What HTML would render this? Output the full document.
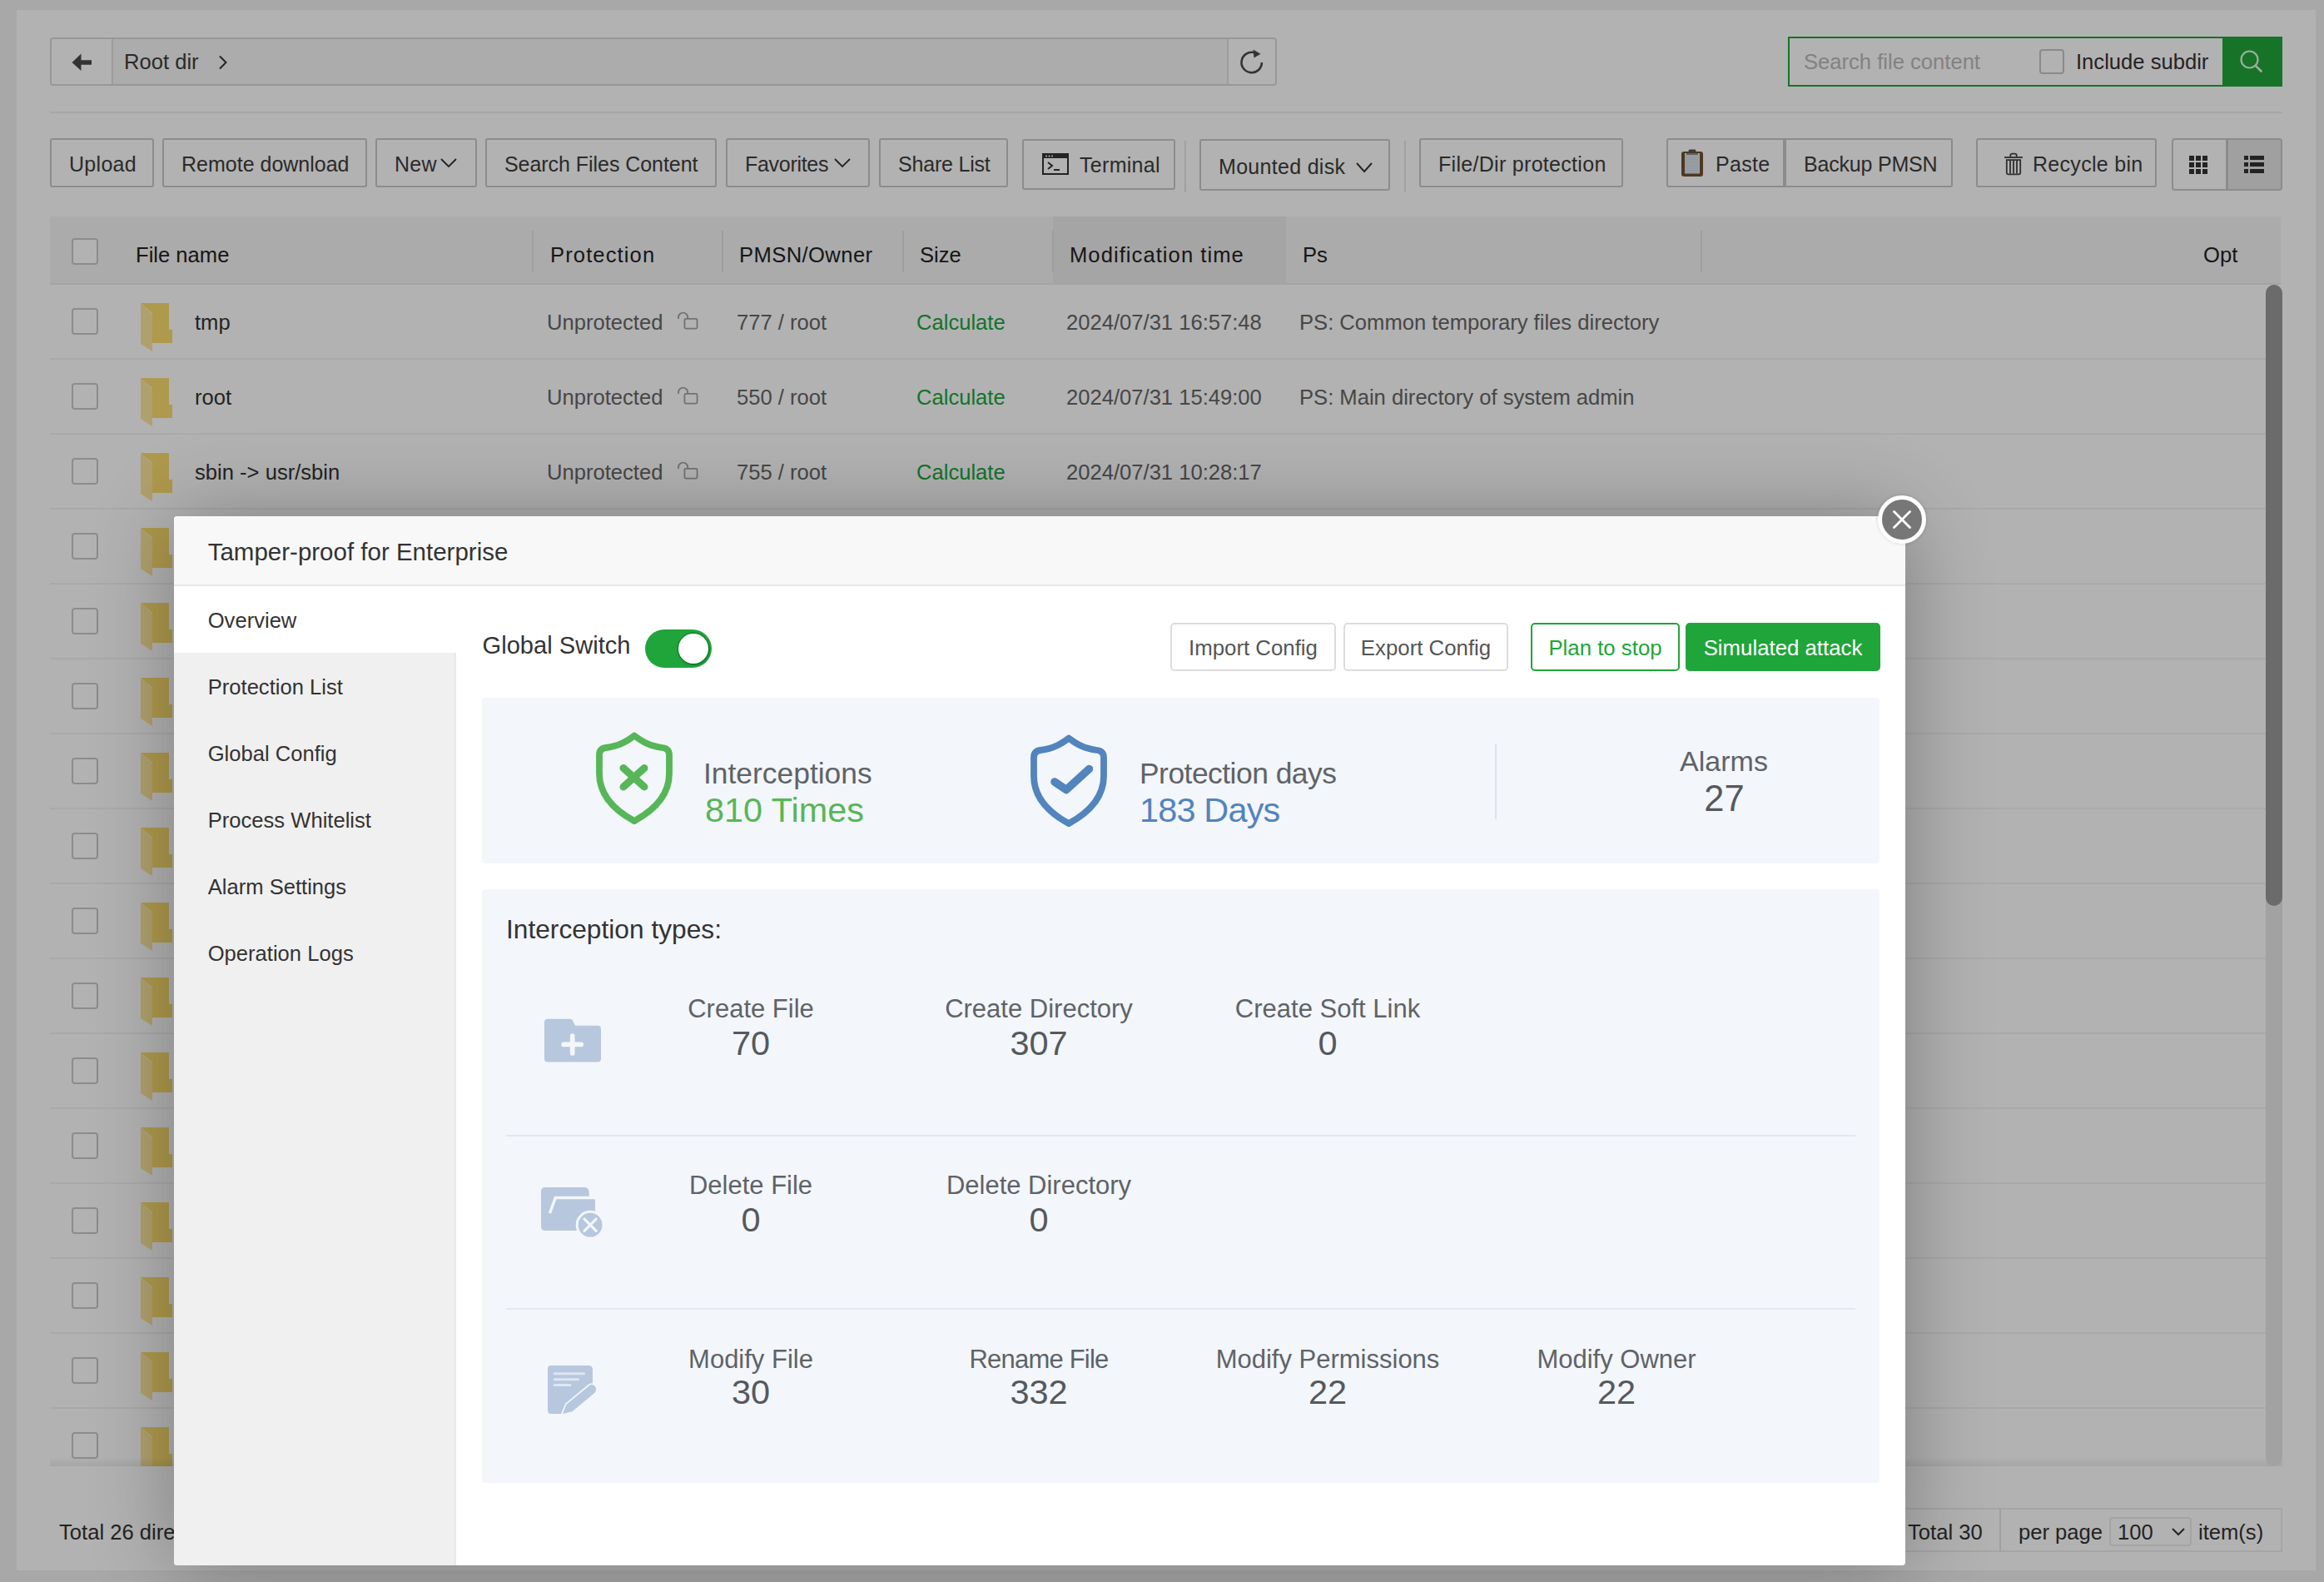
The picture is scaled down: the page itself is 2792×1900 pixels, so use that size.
<!DOCTYPE html>
<html><head><meta charset="utf-8">
<style>
*{box-sizing:border-box;margin:0;padding:0}
html,body{width:2792px;height:1900px;overflow:hidden}
body{font-family:"Liberation Sans",sans-serif;background:#f1f1f1;position:relative;color:#333}
.a{position:absolute}
#page{left:20px;top:12px;width:2762px;height:1874px;background:#fff}
.btn{position:absolute;top:166px;height:59px;border:2px solid #c9c9c9;border-radius:3px;background:#fff;font-size:25px;letter-spacing:0.3px;color:#3d3d3d;white-space:nowrap;line-height:58px;padding:0 0 0 21px}
.vdiv{position:absolute;width:2px;background:#e6e6e6}
.th{position:absolute;top:0;height:80px;line-height:92px;font-size:25.6px;color:#222;white-space:nowrap}
.hsep{position:absolute;top:17px;width:2px;height:50px;background:#e3e3e3}
.row{position:absolute;left:60px;width:2662px;height:90px;border-bottom:2px solid #efefef}
.cb{position:absolute;left:86px;width:32px;height:32px;border:2px solid #c9c9c9;border-radius:4px;background:#fff}
.td{position:absolute;font-size:25.6px;white-space:nowrap;line-height:30px}
#overlay{left:0;top:0;width:2792px;height:1900px;background:rgba(0,0,0,.3)}
#modal{left:209px;top:620px;width:2080px;height:1260px;background:#fff;border-radius:4px;box-shadow:2px 2px 100px rgba(0,0,0,.3);overflow:hidden}
</style></head>
<body>
<div id="page" class="a"></div>

<!-- breadcrumb -->
<div class="a" style="left:60px;top:45px;width:1474px;height:58px;border:2px solid #d9d9d9;border-radius:4px;background:#f6f6f6;overflow:hidden">
  <div class="a" style="left:0;top:0;width:74px;height:54px;background:#fff;border-right:2px solid #e1e1e1"></div>
  <svg class="a" style="left:24px;top:16px" width="26" height="24" viewBox="0 0 26 24"><path d="M0.5 12 L11.5 1.5 L11.5 9.2 L24 9.2 L24 14.8 L11.5 14.8 L11.5 22 Z" fill="#4a4a4a"/></svg>
  <div class="a" style="left:87px;top:12px;font-size:25.6px;line-height:30px;color:#3d3d3d">Root dir</div>
  <svg class="a" style="left:200px;top:19px" width="12" height="18" viewBox="0 0 12 18"><path d="M2 1.5 L9.5 9 L2 16.5" fill="none" stroke="#333" stroke-width="2"/></svg>
  <div class="a" style="left:1412px;top:0;width:60px;height:54px;background:#fff;border-left:2px solid #e1e1e1"></div>
  <svg class="a" style="left:1424px;top:10px" width="36" height="36" viewBox="0 0 36 36"><path d="M29.9 18 A12.2 12.2 0 1 1 20.5 6.1" fill="none" stroke="#4a4a4a" stroke-width="2.6"/><path d="M19.5 2.5 L28.5 7.8 L20.5 12.5 Z" fill="#4a4a4a"/></svg>
</div>

<!-- search box -->
<div class="a" style="left:2148px;top:44px;width:594px;height:60px;border:2px solid #20a53a;background:#fff"></div>
<div class="a" style="left:2167px;top:59px;font-size:25.6px;line-height:30px;color:#bbb">Search file content</div>
<div class="a" style="left:2450px;top:59px;width:30px;height:30px;border:2px solid #c6c6c6;border-radius:4px;background:#fff"></div>
<div class="a" style="left:2494px;top:59px;font-size:25.6px;line-height:30px;color:#333">Include subdir</div>
<div class="a" style="left:2670px;top:44px;width:72px;height:60px;background:#20a53a"></div>
<svg class="a" style="left:2690px;top:58px" width="32" height="32" viewBox="0 0 32 32"><circle cx="12.5" cy="13.5" r="10" fill="none" stroke="#e6f6e6" stroke-width="2.2"/><path d="M19.8 20.8 L26.5 27.5" stroke="#e6f6e6" stroke-width="2.6" stroke-linecap="round"/></svg>

<div class="a" style="left:60px;top:134px;width:2682px;height:2px;background:#eee"></div>

<!-- toolbar buttons -->
<div class="btn" style="left:60px;width:125px">Upload</div>
<div class="btn" style="left:195px;width:246px;letter-spacing:0">Remote download</div>
<div class="btn" style="left:451px;width:122px">New</div>
<svg class="a" style="left:528px;top:189px" width="22" height="13" viewBox="0 0 22 13"><path d="M2 2 L11 11 L20 2" fill="none" stroke="#333" stroke-width="1.9"/></svg>
<div class="btn" style="left:583px;width:278px;letter-spacing:-0.05px">Search Files Content</div>
<div class="btn" style="left:872px;width:173px;letter-spacing:-0.3px">Favorites</div>
<svg class="a" style="left:1001px;top:189px" width="22" height="13" viewBox="0 0 22 13"><path d="M2 2 L11 11 L20 2" fill="none" stroke="#333" stroke-width="1.9"/></svg>
<div class="btn" style="left:1056px;width:155px;letter-spacing:-0.2px">Share List</div>
<div class="btn" style="left:1228px;width:184px;top:167px;height:61px;padding-left:67px;line-height:59px">Terminal</div>
<svg class="a" style="left:1252px;top:184px" width="32" height="26" viewBox="0 0 32 26"><rect x="1" y="1" width="30" height="24" fill="none" stroke="#333" stroke-width="2"/><rect x="1" y="1" width="30" height="5" fill="#333"/><circle cx="5" cy="3.5" r="1" fill="#fff"/><circle cx="8.5" cy="3.5" r="1" fill="#fff"/><circle cx="12" cy="3.5" r="1" fill="#fff"/><path d="M7 11 L12 15 L7 19" fill="none" stroke="#333" stroke-width="2"/><path d="M14 20 L21 20" stroke="#333" stroke-width="2"/></svg>
<div class="vdiv" style="left:1423px;top:169px;height:62px"></div>
<div class="btn" style="left:1441px;width:229px;top:167px;height:62px;line-height:63px">Mounted disk</div>
<svg class="a" style="left:1628px;top:194px" width="22" height="14" viewBox="0 0 22 14"><path d="M2 2 L11 12 L20 2" fill="none" stroke="#333" stroke-width="1.9"/></svg>
<div class="vdiv" style="left:1687px;top:169px;height:62px"></div>
<div class="btn" style="left:1705px;width:245px">File/Dir protection</div>
<div class="btn" style="left:2002px;width:142px;padding-left:57px;border-radius:3px 0 0 3px">Paste</div>
<svg class="a" style="left:2019px;top:178px" width="28" height="36" viewBox="0 0 28 36"><rect x="1" y="4" width="26" height="30" rx="3" fill="#6e5232"/><rect x="5" y="6" width="18" height="24.5" fill="#e3ecf3"/><path d="M5 9 H22" stroke="#c3ced8" stroke-width="1"/><path d="M5 11.5 H22" stroke="#c3ced8" stroke-width="1"/><path d="M5 14 H22" stroke="#c3ced8" stroke-width="1"/><path d="M5 16.5 H22" stroke="#c3ced8" stroke-width="1"/><path d="M5 19 H22" stroke="#c3ced8" stroke-width="1"/><path d="M5 21.5 H22" stroke="#c3ced8" stroke-width="1"/><path d="M5 24 H22" stroke="#c3ced8" stroke-width="1"/><path d="M5 26.5 H22" stroke="#c3ced8" stroke-width="1"/><path d="M5 29 H22" stroke="#c3ced8" stroke-width="1"/><path d="M7 7 H21" stroke="#8a8a8a" stroke-width="2"/><rect x="9.5" y="1.5" width="9" height="3" rx="1.5" fill="#555"/></svg>
<div class="btn" style="left:2144px;width:202px;border-radius:0 3px 3px 0;letter-spacing:-0.2px">Backup PMSN</div>
<div class="btn" style="left:2374px;width:217px;padding-left:66px">Recycle bin</div>
<svg class="a" style="left:2406px;top:182px" width="26" height="30" viewBox="0 0 26 30"><g fill="none" stroke="#444" stroke-width="1.8"><path d="M2 7 H24"/><path d="M9.3 6.5 V4.8 Q9.3 2.6 11.5 2.6 H14.5 Q16.7 2.6 16.7 4.8 V6.5"/><path d="M4.8 10.2 V25.3 Q4.8 27.4 6.9 27.4 H19.1 Q21.2 27.4 21.2 25.3 V10.2 Z"/><path d="M9 10.5 V26.5 M13 10.5 V26.5 M17 10.5 V26.5"/></g></svg>
<div class="btn" style="left:2609px;width:67px;top:166px;height:63px;border-radius:4px 0 0 4px;padding:0"></div>
<div class="btn" style="left:2675px;width:67px;top:166px;height:63px;border-radius:0 4px 4px 0;padding:0;background:#e6e6e6;border-color:#c8c8c8"></div>
<svg class="a" style="left:2630px;top:187px" width="22" height="22" viewBox="0 0 22 22"><g fill="#333"><rect x="0" y="0" width="6" height="6"/><rect x="8" y="0" width="6" height="6"/><rect x="16" y="0" width="6" height="6"/><rect x="0" y="8" width="6" height="6"/><rect x="8" y="8" width="6" height="6"/><rect x="16" y="8" width="6" height="6"/><rect x="0" y="16" width="6" height="6"/><rect x="8" y="16" width="6" height="6"/><rect x="16" y="16" width="6" height="6"/></g></svg>
<svg class="a" style="left:2696px;top:187px" width="24" height="22" viewBox="0 0 24 22"><g fill="#333"><rect x="0" y="0" width="5" height="5"/><rect x="7" y="0" width="17" height="5"/><rect x="0" y="8" width="5" height="5"/><rect x="7" y="8" width="17" height="5"/><rect x="0" y="16" width="5" height="5"/><rect x="7" y="16" width="17" height="5"/></g></svg>

<!-- table -->
<div class="a" style="left:60px;top:260px;width:2680px;height:82px;background:#f5f5f5;border-bottom:2px solid #ebebeb">
  <div class="a" style="left:1205px;top:0;width:280px;height:80px;background:#ececec"></div>
  <div class="cb" style="left:26px;top:26px"></div>
  <div class="th" style="left:103px">File name</div>
  <div class="hsep" style="left:579px"></div>
  <div class="th" style="left:601px;letter-spacing:1.1px">Protection</div>
  <div class="hsep" style="left:807px"></div>
  <div class="th" style="left:828px;letter-spacing:0.4px">PMSN/Owner</div>
  <div class="hsep" style="left:1024px"></div>
  <div class="th" style="left:1045px">Size</div>
  <div class="hsep" style="left:1204px"></div>
  <div class="th" style="left:1225px;letter-spacing:1.05px">Modification time</div>
  <div class="th" style="left:1505px">Ps</div>
  <div class="hsep" style="left:1983px"></div>
  <div class="th" style="left:2587px">Opt</div>
</div>
<div class="a" style="left:0;top:0;width:2792px;height:1761px;overflow:hidden"><div class="a" style="left:60px;top:430px;width:2662px;height:2px;background:#f2f2f2"></div>
<div class="cb" style="top:370px"></div>
<svg class="a" style="left:168px;top:363px" width="40" height="60" viewBox="0 0 40 60"><path d="M1 1 L35 1 L35 33 L39 33 L39 49 L15 49 L15 13 L1 1 Z" fill="#f9dc6e"/><path d="M1 1 L15 14 L15 59 L1 50 Z" fill="#fce59e"/></svg>
<div class="td" style="left:234px;top:372px;color:#333">tmp</div>
<div class="td" style="left:657px;top:372px;color:#666">Unprotected</div>
<svg class="a" style="left:812px;top:372px" width="30" height="26" viewBox="0 0 30 26"><path d="M3 11 L3 9.2 A5.6 5.6 0 0 1 14.2 9.2 L14.2 10.5" fill="none" stroke="#a4a4a4" stroke-width="1.8"/><rect x="10.45" y="10.85" width="15.1" height="11.7" rx="1.5" fill="none" stroke="#a4a4a4" stroke-width="1.8"/></svg>
<div class="td" style="left:885px;top:372px;color:#666">777 / root</div>
<div class="td" style="left:1101px;top:372px;color:#20a53a">Calculate</div>
<div class="td" style="left:1281px;top:372px;color:#666">2024/07/31 16:57:48</div>
<div class="td" style="left:1561px;top:372px;color:#666">PS: Common temporary files directory</div>
<div class="a" style="left:60px;top:520px;width:2662px;height:2px;background:#f2f2f2"></div>
<div class="cb" style="top:460px"></div>
<svg class="a" style="left:168px;top:453px" width="40" height="60" viewBox="0 0 40 60"><path d="M1 1 L35 1 L35 33 L39 33 L39 49 L15 49 L15 13 L1 1 Z" fill="#f9dc6e"/><path d="M1 1 L15 14 L15 59 L1 50 Z" fill="#fce59e"/></svg>
<div class="td" style="left:234px;top:462px;color:#333">root</div>
<div class="td" style="left:657px;top:462px;color:#666">Unprotected</div>
<svg class="a" style="left:812px;top:462px" width="30" height="26" viewBox="0 0 30 26"><path d="M3 11 L3 9.2 A5.6 5.6 0 0 1 14.2 9.2 L14.2 10.5" fill="none" stroke="#a4a4a4" stroke-width="1.8"/><rect x="10.45" y="10.85" width="15.1" height="11.7" rx="1.5" fill="none" stroke="#a4a4a4" stroke-width="1.8"/></svg>
<div class="td" style="left:885px;top:462px;color:#666">550 / root</div>
<div class="td" style="left:1101px;top:462px;color:#20a53a">Calculate</div>
<div class="td" style="left:1281px;top:462px;color:#666">2024/07/31 15:49:00</div>
<div class="td" style="left:1561px;top:462px;color:#666">PS: Main directory of system admin</div>
<div class="a" style="left:60px;top:610px;width:2662px;height:2px;background:#f2f2f2"></div>
<div class="cb" style="top:550px"></div>
<svg class="a" style="left:168px;top:543px" width="40" height="60" viewBox="0 0 40 60"><path d="M1 1 L35 1 L35 33 L39 33 L39 49 L15 49 L15 13 L1 1 Z" fill="#f9dc6e"/><path d="M1 1 L15 14 L15 59 L1 50 Z" fill="#fce59e"/></svg>
<div class="td" style="left:234px;top:552px;color:#333">sbin -&gt; usr/sbin</div>
<div class="td" style="left:657px;top:552px;color:#666">Unprotected</div>
<svg class="a" style="left:812px;top:552px" width="30" height="26" viewBox="0 0 30 26"><path d="M3 11 L3 9.2 A5.6 5.6 0 0 1 14.2 9.2 L14.2 10.5" fill="none" stroke="#a4a4a4" stroke-width="1.8"/><rect x="10.45" y="10.85" width="15.1" height="11.7" rx="1.5" fill="none" stroke="#a4a4a4" stroke-width="1.8"/></svg>
<div class="td" style="left:885px;top:552px;color:#666">755 / root</div>
<div class="td" style="left:1101px;top:552px;color:#20a53a">Calculate</div>
<div class="td" style="left:1281px;top:552px;color:#666">2024/07/31 10:28:17</div>
<div class="a" style="left:60px;top:700px;width:2662px;height:2px;background:#f2f2f2"></div>
<div class="cb" style="top:640px"></div>
<svg class="a" style="left:168px;top:633px" width="40" height="60" viewBox="0 0 40 60"><path d="M1 1 L35 1 L35 33 L39 33 L39 49 L15 49 L15 13 L1 1 Z" fill="#f9dc6e"/><path d="M1 1 L15 14 L15 59 L1 50 Z" fill="#fce59e"/></svg>
<div class="a" style="left:60px;top:790px;width:2662px;height:2px;background:#f2f2f2"></div>
<div class="cb" style="top:730px"></div>
<svg class="a" style="left:168px;top:723px" width="40" height="60" viewBox="0 0 40 60"><path d="M1 1 L35 1 L35 33 L39 33 L39 49 L15 49 L15 13 L1 1 Z" fill="#f9dc6e"/><path d="M1 1 L15 14 L15 59 L1 50 Z" fill="#fce59e"/></svg>
<div class="a" style="left:60px;top:880px;width:2662px;height:2px;background:#f2f2f2"></div>
<div class="cb" style="top:820px"></div>
<svg class="a" style="left:168px;top:813px" width="40" height="60" viewBox="0 0 40 60"><path d="M1 1 L35 1 L35 33 L39 33 L39 49 L15 49 L15 13 L1 1 Z" fill="#f9dc6e"/><path d="M1 1 L15 14 L15 59 L1 50 Z" fill="#fce59e"/></svg>
<div class="a" style="left:60px;top:970px;width:2662px;height:2px;background:#f2f2f2"></div>
<div class="cb" style="top:910px"></div>
<svg class="a" style="left:168px;top:903px" width="40" height="60" viewBox="0 0 40 60"><path d="M1 1 L35 1 L35 33 L39 33 L39 49 L15 49 L15 13 L1 1 Z" fill="#f9dc6e"/><path d="M1 1 L15 14 L15 59 L1 50 Z" fill="#fce59e"/></svg>
<div class="a" style="left:60px;top:1060px;width:2662px;height:2px;background:#f2f2f2"></div>
<div class="cb" style="top:1000px"></div>
<svg class="a" style="left:168px;top:993px" width="40" height="60" viewBox="0 0 40 60"><path d="M1 1 L35 1 L35 33 L39 33 L39 49 L15 49 L15 13 L1 1 Z" fill="#f9dc6e"/><path d="M1 1 L15 14 L15 59 L1 50 Z" fill="#fce59e"/></svg>
<div class="a" style="left:60px;top:1150px;width:2662px;height:2px;background:#f2f2f2"></div>
<div class="cb" style="top:1090px"></div>
<svg class="a" style="left:168px;top:1083px" width="40" height="60" viewBox="0 0 40 60"><path d="M1 1 L35 1 L35 33 L39 33 L39 49 L15 49 L15 13 L1 1 Z" fill="#f9dc6e"/><path d="M1 1 L15 14 L15 59 L1 50 Z" fill="#fce59e"/></svg>
<div class="a" style="left:60px;top:1240px;width:2662px;height:2px;background:#f2f2f2"></div>
<div class="cb" style="top:1180px"></div>
<svg class="a" style="left:168px;top:1173px" width="40" height="60" viewBox="0 0 40 60"><path d="M1 1 L35 1 L35 33 L39 33 L39 49 L15 49 L15 13 L1 1 Z" fill="#f9dc6e"/><path d="M1 1 L15 14 L15 59 L1 50 Z" fill="#fce59e"/></svg>
<div class="a" style="left:60px;top:1330px;width:2662px;height:2px;background:#f2f2f2"></div>
<div class="cb" style="top:1270px"></div>
<svg class="a" style="left:168px;top:1263px" width="40" height="60" viewBox="0 0 40 60"><path d="M1 1 L35 1 L35 33 L39 33 L39 49 L15 49 L15 13 L1 1 Z" fill="#f9dc6e"/><path d="M1 1 L15 14 L15 59 L1 50 Z" fill="#fce59e"/></svg>
<div class="a" style="left:60px;top:1420px;width:2662px;height:2px;background:#f2f2f2"></div>
<div class="cb" style="top:1360px"></div>
<svg class="a" style="left:168px;top:1353px" width="40" height="60" viewBox="0 0 40 60"><path d="M1 1 L35 1 L35 33 L39 33 L39 49 L15 49 L15 13 L1 1 Z" fill="#f9dc6e"/><path d="M1 1 L15 14 L15 59 L1 50 Z" fill="#fce59e"/></svg>
<div class="a" style="left:60px;top:1510px;width:2662px;height:2px;background:#f2f2f2"></div>
<div class="cb" style="top:1450px"></div>
<svg class="a" style="left:168px;top:1443px" width="40" height="60" viewBox="0 0 40 60"><path d="M1 1 L35 1 L35 33 L39 33 L39 49 L15 49 L15 13 L1 1 Z" fill="#f9dc6e"/><path d="M1 1 L15 14 L15 59 L1 50 Z" fill="#fce59e"/></svg>
<div class="a" style="left:60px;top:1600px;width:2662px;height:2px;background:#f2f2f2"></div>
<div class="cb" style="top:1540px"></div>
<svg class="a" style="left:168px;top:1533px" width="40" height="60" viewBox="0 0 40 60"><path d="M1 1 L35 1 L35 33 L39 33 L39 49 L15 49 L15 13 L1 1 Z" fill="#f9dc6e"/><path d="M1 1 L15 14 L15 59 L1 50 Z" fill="#fce59e"/></svg>
<div class="a" style="left:60px;top:1690px;width:2662px;height:2px;background:#f2f2f2"></div>
<div class="cb" style="top:1630px"></div>
<svg class="a" style="left:168px;top:1623px" width="40" height="60" viewBox="0 0 40 60"><path d="M1 1 L35 1 L35 33 L39 33 L39 49 L15 49 L15 13 L1 1 Z" fill="#f9dc6e"/><path d="M1 1 L15 14 L15 59 L1 50 Z" fill="#fce59e"/></svg>
<div class="a" style="left:60px;top:1780px;width:2662px;height:2px;background:#f2f2f2"></div>
<div class="cb" style="top:1720px"></div>
<svg class="a" style="left:168px;top:1713px" width="40" height="60" viewBox="0 0 40 60"><path d="M1 1 L35 1 L35 33 L39 33 L39 49 L15 49 L15 13 L1 1 Z" fill="#f9dc6e"/><path d="M1 1 L15 14 L15 59 L1 50 Z" fill="#fce59e"/></svg></div>
<div class="a" style="left:60px;top:1750px;width:2682px;height:11px;background:linear-gradient(rgba(0,0,0,0),rgba(0,0,0,.07))"></div>
<!-- scrollbar -->
<div class="a" style="left:2722px;top:342px;width:20px;height:1419px;border-radius:10px;background:#e9e9e9"></div>
<div class="a" style="left:2722px;top:342px;width:20px;height:746px;border-radius:10px;background:#9a9a9a"></div>

<!-- footer -->
<div class="a" style="left:71px;top:1825px;font-size:25.6px;line-height:30px;color:#333">Total 26 directories, 4 files</div>
<div class="a" style="left:2200px;top:1811px;width:542px;height:53px;border:2px solid #ececec"></div>
<div class="a" style="left:2292px;top:1825px;font-size:25.6px;line-height:30px;color:#333">Total 30</div>
<div class="vdiv" style="left:2402px;top:1811px;height:53px"></div>
<div class="a" style="left:2425px;top:1825px;font-size:25.6px;line-height:30px;color:#333">per page</div>
<div class="a" style="left:2534px;top:1822px;width:99px;height:35px;border:2px solid #ebebeb;border-radius:4px;background:#fff"></div>
<div class="a" style="left:2544px;top:1825px;font-size:25.6px;line-height:30px;color:#333">100</div>
<svg class="a" style="left:2608px;top:1834px" width="18" height="12" viewBox="0 0 18 12"><path d="M2 2 L9 9 L16 2" fill="none" stroke="#333" stroke-width="2"/></svg>
<div class="a" style="left:2641px;top:1825px;font-size:25.6px;line-height:30px;color:#333">item(s)</div>

<div id="overlay" class="a"></div>

<div id="modal" class="a"><div class="a" style="left:-209px;top:-620px;width:2792px;height:1900px">
<div class="a" style="left:209px;top:620px;width:2080px;height:84px;background:#f8f8f8;border-bottom:2px solid #e8e8e8"></div>
<div class="a" style="left:249.7px;top:647.8px;font-size:29.5px;line-height:29.5px;color:#333;white-space:nowrap;">Tamper-proof for Enterprise</div>
<div class="a" style="left:209px;top:704px;width:339px;height:1176px;background:#f0f0f0;border-right:2px solid #e9e9e9"></div>
<div class="a" style="left:209px;top:704px;width:339px;height:80px;background:#fff"></div>
<div class="a" style="left:249.7px;top:732.6px;font-size:25.6px;line-height:25.6px;color:#333;white-space:nowrap;">Overview</div>
<div class="a" style="left:249.7px;top:812.6px;font-size:25.6px;line-height:25.6px;color:#333;white-space:nowrap;">Protection List</div>
<div class="a" style="left:249.7px;top:892.6px;font-size:25.6px;line-height:25.6px;color:#333;white-space:nowrap;">Global Config</div>
<div class="a" style="left:249.7px;top:972.6px;font-size:25.6px;line-height:25.6px;color:#333;white-space:nowrap;">Process Whitelist</div>
<div class="a" style="left:249.7px;top:1052.6px;font-size:25.6px;line-height:25.6px;color:#333;white-space:nowrap;">Alarm Settings</div>
<div class="a" style="left:249.7px;top:1132.6px;font-size:25.6px;line-height:25.6px;color:#333;white-space:nowrap;">Operation Logs</div>
<div class="a" style="left:579.6px;top:761.4px;font-size:29.1px;line-height:29.1px;color:#333;white-space:nowrap;">Global Switch</div>
<div class="a" style="left:775px;top:756px;width:80px;height:46px;border-radius:23px;background:#20a53a"></div>
<div class="a" style="left:815px;top:761px;width:36px;height:36px;border-radius:18px;background:#fff;box-shadow:0 0 0 1.5px rgba(0,80,20,.35),1px 2px 3px rgba(0,0,0,.2)"></div>
<div class="a" style="left:1406px;top:748px;width:199px;height:58px;border-radius:5px;border:2px solid #dcdcdc;background:#fff;font-size:25.8px;line-height:56px;text-align:center;color:#555;white-space:nowrap">Import Config</div>
<div class="a" style="left:1614px;top:748px;width:198px;height:58px;border-radius:5px;border:2px solid #dcdcdc;background:#fff;font-size:25.8px;line-height:56px;text-align:center;color:#555;white-space:nowrap">Export Config</div>
<div class="a" style="left:1839px;top:748px;width:179px;height:58px;border-radius:5px;border:2px solid #20a53a;background:#fff;font-size:25.8px;line-height:56px;text-align:center;color:#20a53a;white-space:nowrap">Plan to stop</div>
<div class="a" style="left:2025px;top:748px;width:234px;height:58px;border-radius:5px;border:2px solid #20a53a;background:#20a53a;font-size:25.8px;line-height:56px;text-align:center;color:#fff;white-space:nowrap">Simulated attack</div>
<div class="a" style="left:579px;top:838px;width:1679px;height:199px;border-radius:4px;background:#f3f6fb"></div>
<svg class="a" style="left:716px;top:879px" width="92" height="112" viewBox="0 0 92 112"><path d="M46 4.5 C40 9 30 17 12 19 Q4 20 4 28 L4 50 C4 76 22 94 46 107 C70 94 88 76 88 50 L88 28 Q88 20 80 19 C62 17 52 9 46 4.5 Z" fill="none" stroke="#57b657" stroke-width="7.8" stroke-linejoin="round"/><path d="M33 43.5 L58 66 M58 43.5 L33 66" stroke="#57b657" stroke-width="9" stroke-linecap="round"/></svg>
<div class="a" style="left:845.0px;top:911.8px;font-size:35.4px;line-height:35.4px;color:#5f6368;white-space:nowrap;">Interceptions</div>
<div class="a" style="left:847.0px;top:953.0px;font-size:41.4px;line-height:41.4px;color:#57b657;white-space:nowrap;">810 Times</div>
<svg class="a" style="left:1238px;top:881.5px" width="92" height="112" viewBox="0 0 92 112"><path d="M46 4.5 C40 9 30 17 12 19 Q4 20 4 28 L4 50 C4 76 22 94 46 107 C70 94 88 76 88 50 L88 28 Q88 20 80 19 C62 17 52 9 46 4.5 Z" fill="none" stroke="#5284bd" stroke-width="7.8" stroke-linejoin="round"/><path d="M29 57 L43 66.5 L70.5 41.5" fill="none" stroke="#5284bd" stroke-width="9.5" stroke-linecap="round" stroke-linejoin="round"/></svg>
<div class="a" style="left:1369.0px;top:911.8px;font-size:35.4px;line-height:35.4px;color:#5f6368;white-space:nowrap;letter-spacing:-0.5px">Protection days</div>
<div class="a" style="left:1369.0px;top:953.0px;font-size:41.4px;line-height:41.4px;color:#5284bd;white-space:nowrap;letter-spacing:-0.8px">183 Days</div>
<div class="a" style="left:1796px;top:893px;width:2px;height:91px;background:#dfe3ea"></div>
<div class="a" style="left:1921.0px;top:897.2px;width:300px;text-align:center;font-size:34px;line-height:34px;color:#5f6368;white-space:nowrap;">Alarms</div>
<div class="a" style="left:1921.5px;top:937.8px;width:300px;text-align:center;font-size:43.5px;line-height:43.5px;color:#55595e;white-space:nowrap;">27</div>
<div class="a" style="left:579px;top:1068px;width:1679px;height:713px;border-radius:4px;background:#f3f6fb"></div>
<div class="a" style="left:608.0px;top:1101.1px;font-size:31.7px;line-height:31.7px;color:#333;white-space:nowrap;">Interception types:</div>
<div class="a" style="left:608px;top:1363px;width:1621px;height:2px;background:#e3e8f0"></div>
<div class="a" style="left:608px;top:1571px;width:1621px;height:2px;background:#e3e8f0"></div>
<div class="a" style="left:732.0px;top:1196.3px;width:340px;text-align:center;font-size:31px;line-height:31px;color:#5f6368;white-space:nowrap;">Create File</div>
<div class="a" style="left:732.0px;top:1231.9px;width:340px;text-align:center;font-size:41.5px;line-height:41.5px;color:#55595e;white-space:nowrap;">70</div>
<div class="a" style="left:1078.0px;top:1196.3px;width:340px;text-align:center;font-size:31px;line-height:31px;color:#5f6368;white-space:nowrap;">Create Directory</div>
<div class="a" style="left:1078.0px;top:1231.9px;width:340px;text-align:center;font-size:41.5px;line-height:41.5px;color:#55595e;white-space:nowrap;">307</div>
<div class="a" style="left:1425.0px;top:1196.3px;width:340px;text-align:center;font-size:31px;line-height:31px;color:#5f6368;white-space:nowrap;">Create Soft Link</div>
<div class="a" style="left:1425.0px;top:1231.9px;width:340px;text-align:center;font-size:41.5px;line-height:41.5px;color:#55595e;white-space:nowrap;">0</div>
<div class="a" style="left:732.0px;top:1408.4px;width:340px;text-align:center;font-size:31px;line-height:31px;color:#5f6368;white-space:nowrap;">Delete File</div>
<div class="a" style="left:732.0px;top:1443.5px;width:340px;text-align:center;font-size:41.5px;line-height:41.5px;color:#55595e;white-space:nowrap;">0</div>
<div class="a" style="left:1078.0px;top:1408.4px;width:340px;text-align:center;font-size:31px;line-height:31px;color:#5f6368;white-space:nowrap;">Delete Directory</div>
<div class="a" style="left:1078.0px;top:1443.5px;width:340px;text-align:center;font-size:41.5px;line-height:41.5px;color:#55595e;white-space:nowrap;">0</div>
<div class="a" style="left:732.0px;top:1616.8px;width:340px;text-align:center;font-size:31px;line-height:31px;color:#5f6368;white-space:nowrap;">Modify File</div>
<div class="a" style="left:732.0px;top:1651.3px;width:340px;text-align:center;font-size:41.5px;line-height:41.5px;color:#55595e;white-space:nowrap;">30</div>
<div class="a" style="left:1078.0px;top:1616.8px;width:340px;text-align:center;font-size:31px;line-height:31px;color:#5f6368;white-space:nowrap;letter-spacing:-0.8px">Rename File</div>
<div class="a" style="left:1078.0px;top:1651.3px;width:340px;text-align:center;font-size:41.5px;line-height:41.5px;color:#55595e;white-space:nowrap;">332</div>
<div class="a" style="left:1425.0px;top:1616.8px;width:340px;text-align:center;font-size:31px;line-height:31px;color:#5f6368;white-space:nowrap;">Modify Permissions</div>
<div class="a" style="left:1425.0px;top:1651.3px;width:340px;text-align:center;font-size:41.5px;line-height:41.5px;color:#55595e;white-space:nowrap;">22</div>
<div class="a" style="left:1772.0px;top:1616.8px;width:340px;text-align:center;font-size:31px;line-height:31px;color:#5f6368;white-space:nowrap;">Modify Owner</div>
<div class="a" style="left:1772.0px;top:1651.3px;width:340px;text-align:center;font-size:41.5px;line-height:41.5px;color:#55595e;white-space:nowrap;">22</div>
<svg class="a" style="left:654px;top:1223px" width="70" height="54" viewBox="0 0 70 54"><path d="M4 0.8 H31 Q33 0.8 34 2.5 L37 8.8 H64 Q68 8.8 68 12.8 V48.6 Q68 52.6 64 52.6 H4 Q0 52.6 0 48.6 V4.8 Q0 0.8 4 0.8 Z" fill="#b7c7de"/><path d="M33.7 21 V42 M23.2 31.4 H44.2" stroke="#f3f6fb" stroke-width="5.7" stroke-linecap="round"/></svg>
<svg class="a" style="left:649px;top:1425px" width="80" height="64" viewBox="0 0 80 64"><path d="M6 1 H53 Q58 1 58.5 6 L59 13 H61 Q66 13 66 18 V53 H6 Q1 53 1 48 V6 Q1 1 6 1 Z" fill="#b7c7de"/><path d="M11.5 32 L18.3 13.4 H67" fill="none" stroke="#f3f6fb" stroke-width="3.5"/><circle cx="60.1" cy="46.2" r="15.9" fill="#b7c7de" stroke="#f3f6fb" stroke-width="3"/><path d="M53 39 L67.2 53.4 M67.2 39 L53 53.4" stroke="#f3f6fb" stroke-width="3.2" stroke-linecap="round"/></svg>
<svg class="a" style="left:657px;top:1639px" width="64" height="62" viewBox="0 0 64 62"><path d="M5 1 H50 Q55 1 55 6 V26 L28 53 L25 59 H5 Q1 59 1 55 V5 Q1 1 5 1 Z" fill="#b7c7de"/><path d="M9.2 10.7 H44.6 M9.2 17.8 H37.5 M9.2 24.4 H28" stroke="#dde6f3" stroke-width="3" stroke-linecap="round"/><path d="M19 59 L23.5 47.8 L50.5 25.4 Q54 22.5 57.5 25.5 Q60.5 29.5 57.5 33.8 L30.5 56.2 Z" fill="#b7c7de" stroke="#f3f6fb" stroke-width="3.5" stroke-linejoin="round" paint-order="stroke"/></svg>
</div></div>
<div class="a" style="left:2255.5px;top:595px;width:58px;height:58px;border-radius:50%;background:#777;border:5px solid #fff;box-shadow:0 0 4px rgba(0,0,0,.15)"></div>
<svg class="a" style="left:2255.5px;top:595px" width="58" height="58" viewBox="0 0 58 58"><path d="M19.5 19.5 L38.5 38.5 M38.5 19.5 L19.5 38.5" stroke="#fff" stroke-width="2.8" stroke-linecap="round"/></svg>
</body></html>
